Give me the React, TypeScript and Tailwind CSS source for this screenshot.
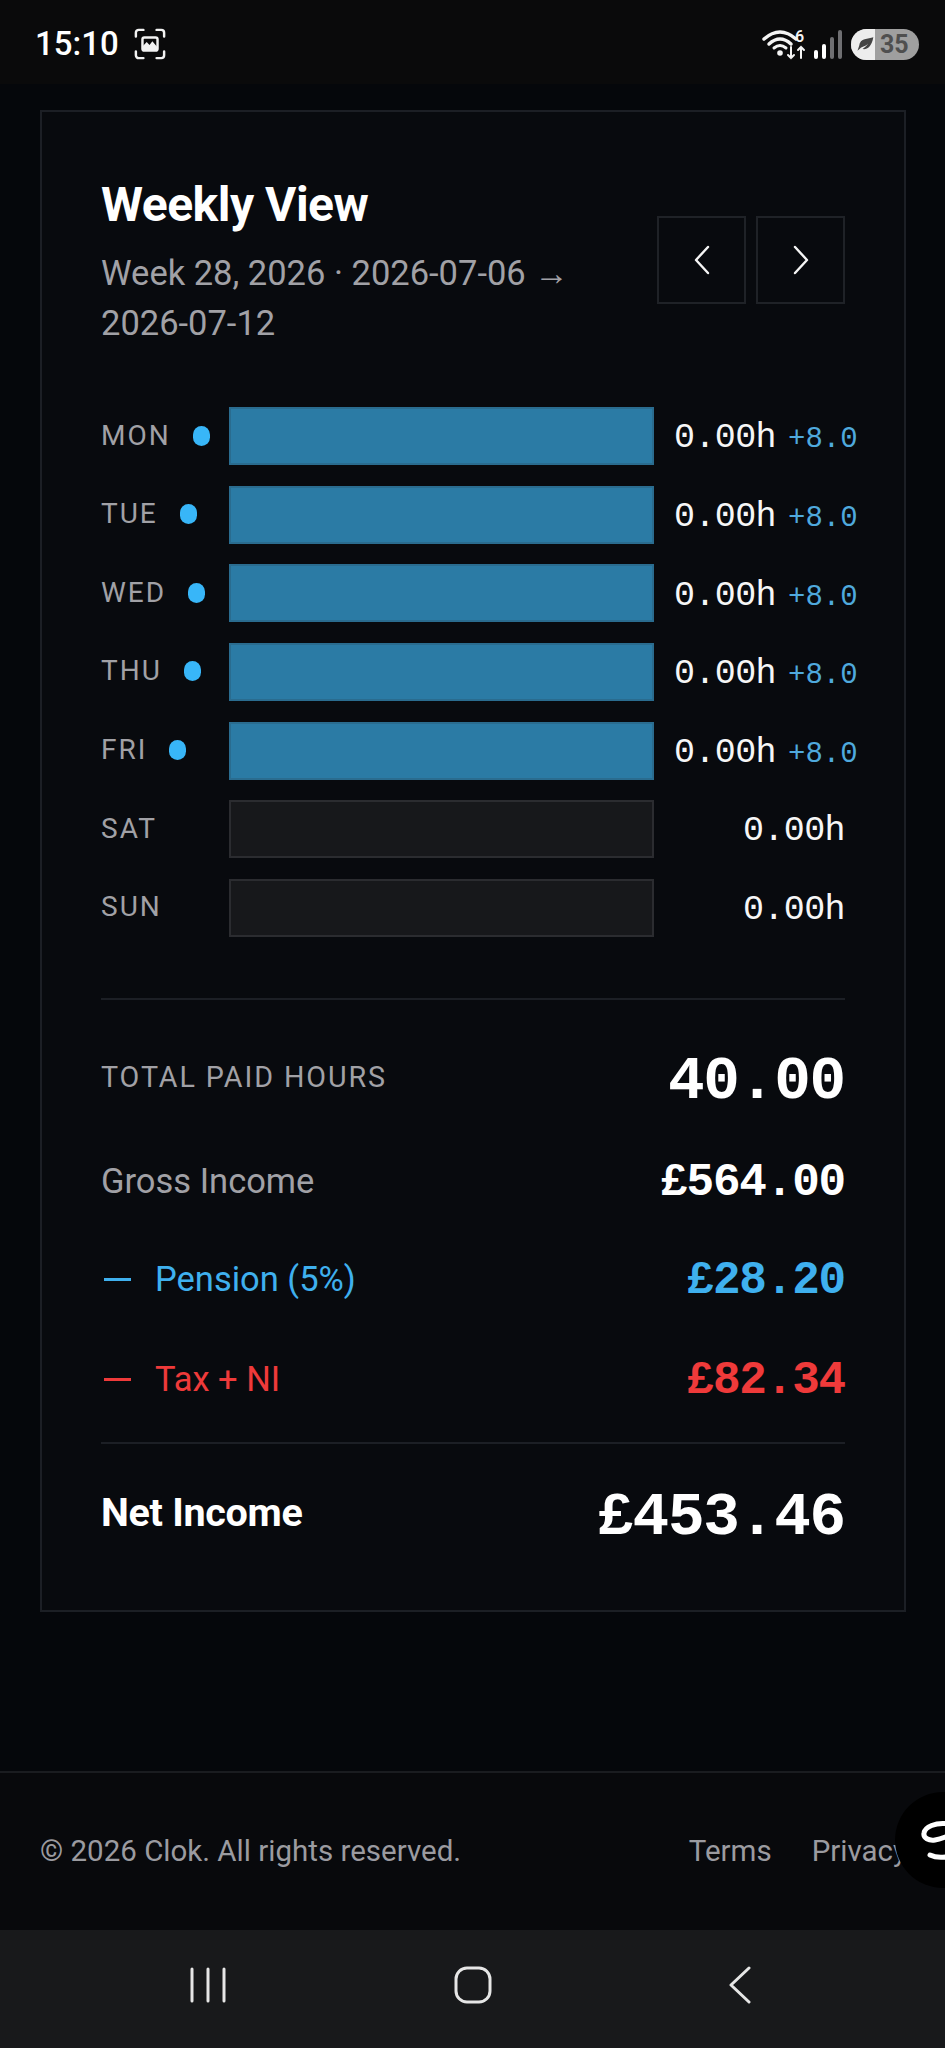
import React from 'react';

const mono = "font-['Liberation_Mono',monospace]";

const days = [
  { label: 'MON', paid: true },
  { label: 'TUE', paid: true },
  { label: 'WED', paid: true },
  { label: 'THU', paid: true },
  { label: 'FRI', paid: true },
  { label: 'SAT', paid: false },
  { label: 'SUN', paid: false },
];

const StatusBar = () => (
  <div className="h-[84px] shrink-0 bg-[#0a0a0b] pt-[4px] pl-[35px] pr-[26px] flex items-center justify-between text-white">
    <div className="flex items-center gap-[15px]">
      <span className="text-[33px] font-medium">15:10</span>
      <svg width="32" height="32" viewBox="0 0 34 34" fill="none" stroke="#f2f2f2" strokeWidth="2.6" strokeLinecap="round">
        <path d="M2 9V5a3 3 0 0 1 3-3h5M24 2h5a3 3 0 0 1 3 3v4M32 25v4a3 3 0 0 1-3 3h-5M10 32H5a3 3 0 0 1-3-3v-4" />
        <rect x="9" y="10" width="16" height="14" rx="2" fill="#0a0a0b" />
        <path d="M9.500 19l4-4 3 3 3-4 5 6v3.500h-15z" fill="#f2f2f2" stroke="none" />
      </svg>
    </div>
    <div className="flex items-center">
      <svg width="46" height="48" viewBox="0 -8 46 48" fill="none" stroke="#f4f4f4" strokeLinecap="round">
        <path d="M2 11Q18 -3 34 11" strokeWidth="3.500" />
        <path d="M7 16Q18 6 29 16" strokeWidth="3.500" />
        <path d="M12 20Q18 15 24 20" strokeWidth="3" />
        <circle cx="18" cy="25" r="2.800" fill="#f4f4f4" stroke="none" />
        <path d="M29 19v11M26 27l3 3 3-3M39 30V19M36 22l3-3 3 3" strokeWidth="2" />
        <text x="33" y="14" fill="#f4f4f4" stroke="none" fontSize="16" fontWeight="600" fontFamily="Roboto, sans-serif">6</text>
      </svg>
      <div className="ml-[6px] flex items-end gap-[4px] h-[29px]">
        <span className="w-[4px] h-[9px] rounded-[2px] bg-white" />
        <span className="w-[4px] h-[15px] rounded-[2px] bg-white" />
        <span className="w-[4px] h-[22px] rounded-[2px] bg-[#6f6f72]" />
        <span className="w-[4px] h-[29px] rounded-[2px] bg-[#6f6f72]" />
      </div>
      <div className="ml-[9px] w-[68px] h-[31px] rounded-full overflow-hidden flex bg-[#9f9f9f]">
        <div className="w-[24px] bg-[#ededed] flex items-center justify-end">
          <svg width="20" height="18" viewBox="0 0 24 20">
            <path d="M3 18c2-1 3-3 5-4 3-2 6-2 8-5-2 4-5 5-7 7 5 1 11-2 13-14C16 4 6 3 5 12l-2 6z" fill="#444" />
          </svg>
        </div>
        <span className="pl-[5px] text-[25px] leading-[31px] font-bold text-[#4f4f4f]">35</span>
      </div>
    </div>
  </div>
);

const NavButton = ({ dir }: { dir: 'left' | 'right' }) => (
  <button className="w-[89px] h-[88px] border-2 border-[#1f2227] flex items-center justify-center">
    <svg width="18" height="30" viewBox="0 0 18 30" fill="none" stroke="#f5f5f5" strokeWidth="2.400" strokeLinecap="round" strokeLinejoin="round">
      <path d={dir === 'left' ? 'M15 2L3 15l12 13' : 'M3 2l12 13L3 28'} />
    </svg>
  </button>
);

const DayRow = ({ label, paid }: { label: string; paid: boolean }) => (
  <div className="flex items-center h-[58px]">
    <div className="w-[128px] shrink-0 flex items-center gap-[22px] -mt-[1px]">
      <span className="text-[28px] tracking-[2px] text-[#a1a1a6]">{label}</span>
      {paid && <span className="w-[17px] h-[20px] rounded-full bg-[#38b6f8]" />}
    </div>
    <div
      className={
        paid
          ? 'w-[425px] h-[58px] shrink-0 bg-[#2b7ba5] border-2 border-[#2a6c8f]'
          : 'w-[425px] h-[58px] shrink-0 bg-[#17181b] border-2 border-[#2b2c30]'
      }
    />
    <div className={`flex-1 flex items-baseline pt-[5px] ${mono} ${paid ? 'pl-[20px]' : 'justify-end'}`}>
      <span className="text-[35px] tracking-[-0.6px] text-[#f6f6f6] whitespace-nowrap">0.00h</span>
      {paid && <span className="ml-[12px] text-[29px] text-[#4fa9dd] whitespace-nowrap">+8.0</span>}
    </div>
  </div>
);

export default function App() {
  return (
    <div className="relative w-[945px] h-[2048px] overflow-hidden flex flex-col bg-[#05070b] font-['Roboto',sans-serif]">
      <StatusBar />

      <main className="pl-[40px] pr-[39px] pt-[26px]">
        <div className="h-[1502px] border-2 border-[#1c1f25] bg-[#080a0e] px-[59px] pt-[65px]">
          <div className="flex justify-between">
            <div>
              <h1 className="text-[48px] leading-[56px] font-bold tracking-[-0.5px] text-white">Weekly View</h1>
              <p className="mt-[16px] w-[490px] text-[34.500px] leading-[49.600px] text-[#a1a1a6]">
                Week 28, 2026 · 2026-07-06 <span className="font-['Liberation_Sans',sans-serif]">→</span> 2026-07-12
              </p>
            </div>
            <div className="flex gap-[10px] pt-[39px]">
              <NavButton dir="left" />
              <NavButton dir="right" />
            </div>
          </div>

          <div className="mt-[59px] flex flex-col gap-[20.600px]">
            {days.map((d) => (
              <DayRow key={d.label} label={d.label} paid={d.paid} />
            ))}
          </div>

          <div className="mt-[61px] h-[2px] bg-[#1c1f25]" />

          <div className="mt-[43px] flex items-center justify-between h-[70px]">
            <span className="text-[28.700px] tracking-[1.900px] text-[#a1a1a6]">TOTAL PAID HOURS</span>
            <span className={`${mono} pt-[8px] text-[61px] tracking-[-1.200px] font-bold text-white`}>40.00</span>
          </div>
          <div className="mt-[34px] flex items-center justify-between h-[70px]">
            <span className="text-[34.500px] text-[#a1a1a6]">Gross Income</span>
            <span className={`${mono} pt-[4px] text-[46px] tracking-[-1.200px] font-bold text-white`}>£564.00</span>
          </div>
          <div className="mt-[28px] flex items-center justify-between h-[70px] text-[#3fb0ee]">
            <span className="flex items-center gap-[24px] text-[34.500px]">
              <span className="ml-[3px] w-[27px] h-[3px] bg-[#3fb0ee]" />
              Pension (5%)
            </span>
            <span className={`${mono} pt-[4px] text-[46px] tracking-[-1.200px] font-bold`}>£28.20</span>
          </div>
          <div className="mt-[30px] flex items-center justify-between h-[70px] text-[#ef3a3a]">
            <span className="flex items-center gap-[24px] text-[34.500px]">
              <span className="ml-[3px] w-[27px] h-[3px] bg-[#ef3a3a]" />
              Tax + NI
            </span>
            <span className={`${mono} pt-[4px] text-[46px] tracking-[-1.200px] font-bold`}>£82.34</span>
          </div>

          <div className="mt-[27px] h-[2px] bg-[#1c1f25]" />

          <div className="mt-[34px] flex items-center justify-between h-[70px]">
            <span className="text-[39.500px] font-bold tracking-[-0.3px] text-white">Net Income</span>
            <span className={`${mono} pt-[10px] text-[61px] tracking-[-1.200px] font-bold text-white`}>£453.46</span>
          </div>
        </div>
      </main>

      <footer className="mt-[159px] h-[159px] shrink-0 border-t-2 border-[#1a1c20] bg-[#08090c] pl-[40px] pr-[38px] flex items-center justify-between text-[29.500px] text-[#9b9ba0]">
        <span>© 2026 Clok. All rights reserved.</span>
        <div className="flex gap-[40px]">
          <span>Terms</span>
          <span>Privacy</span>
        </div>
      </footer>

      {/* floating widget, cut by the right edge */}
      <div className="absolute left-[895px] top-[1792px] w-[96px] h-[96px] rounded-full bg-black overflow-hidden">
        <svg className="absolute left-[26px] top-[29px]" width="30" height="42" viewBox="0 0 30 42" fill="none" stroke="#fff" strokeWidth="5" strokeLinecap="round">
          <path d="M28 3C14 1 4 6 3 12c-1 5 5 8 11 7 6-1 10-3 16-5" />
          <path d="M9 34c6 3 13 3 21 1" />
        </svg>
      </div>

      <div className="h-[118px] mt-auto shrink-0 bg-[#18191b] flex items-center pl-[190px] pb-[8px]">
        <svg width="36" height="36" viewBox="0 0 36 36" stroke="#e6e6e6" strokeWidth="3" strokeLinecap="round">
          <path d="M2 2v32M18 2v32M34 2v32" />
        </svg>
        <svg className="ml-[228px]" width="38" height="38" viewBox="0 0 38 38" fill="none" stroke="#e6e6e6" strokeWidth="3">
          <rect x="2" y="2" width="34" height="34" rx="11" />
        </svg>
        <svg className="ml-[236px]" width="24" height="38" viewBox="0 0 24 38" fill="none" stroke="#e6e6e6" strokeWidth="3" strokeLinecap="round" strokeLinejoin="round">
          <path d="M21 2L3 19l18 17" />
        </svg>
      </div>
    </div>
  );
}
